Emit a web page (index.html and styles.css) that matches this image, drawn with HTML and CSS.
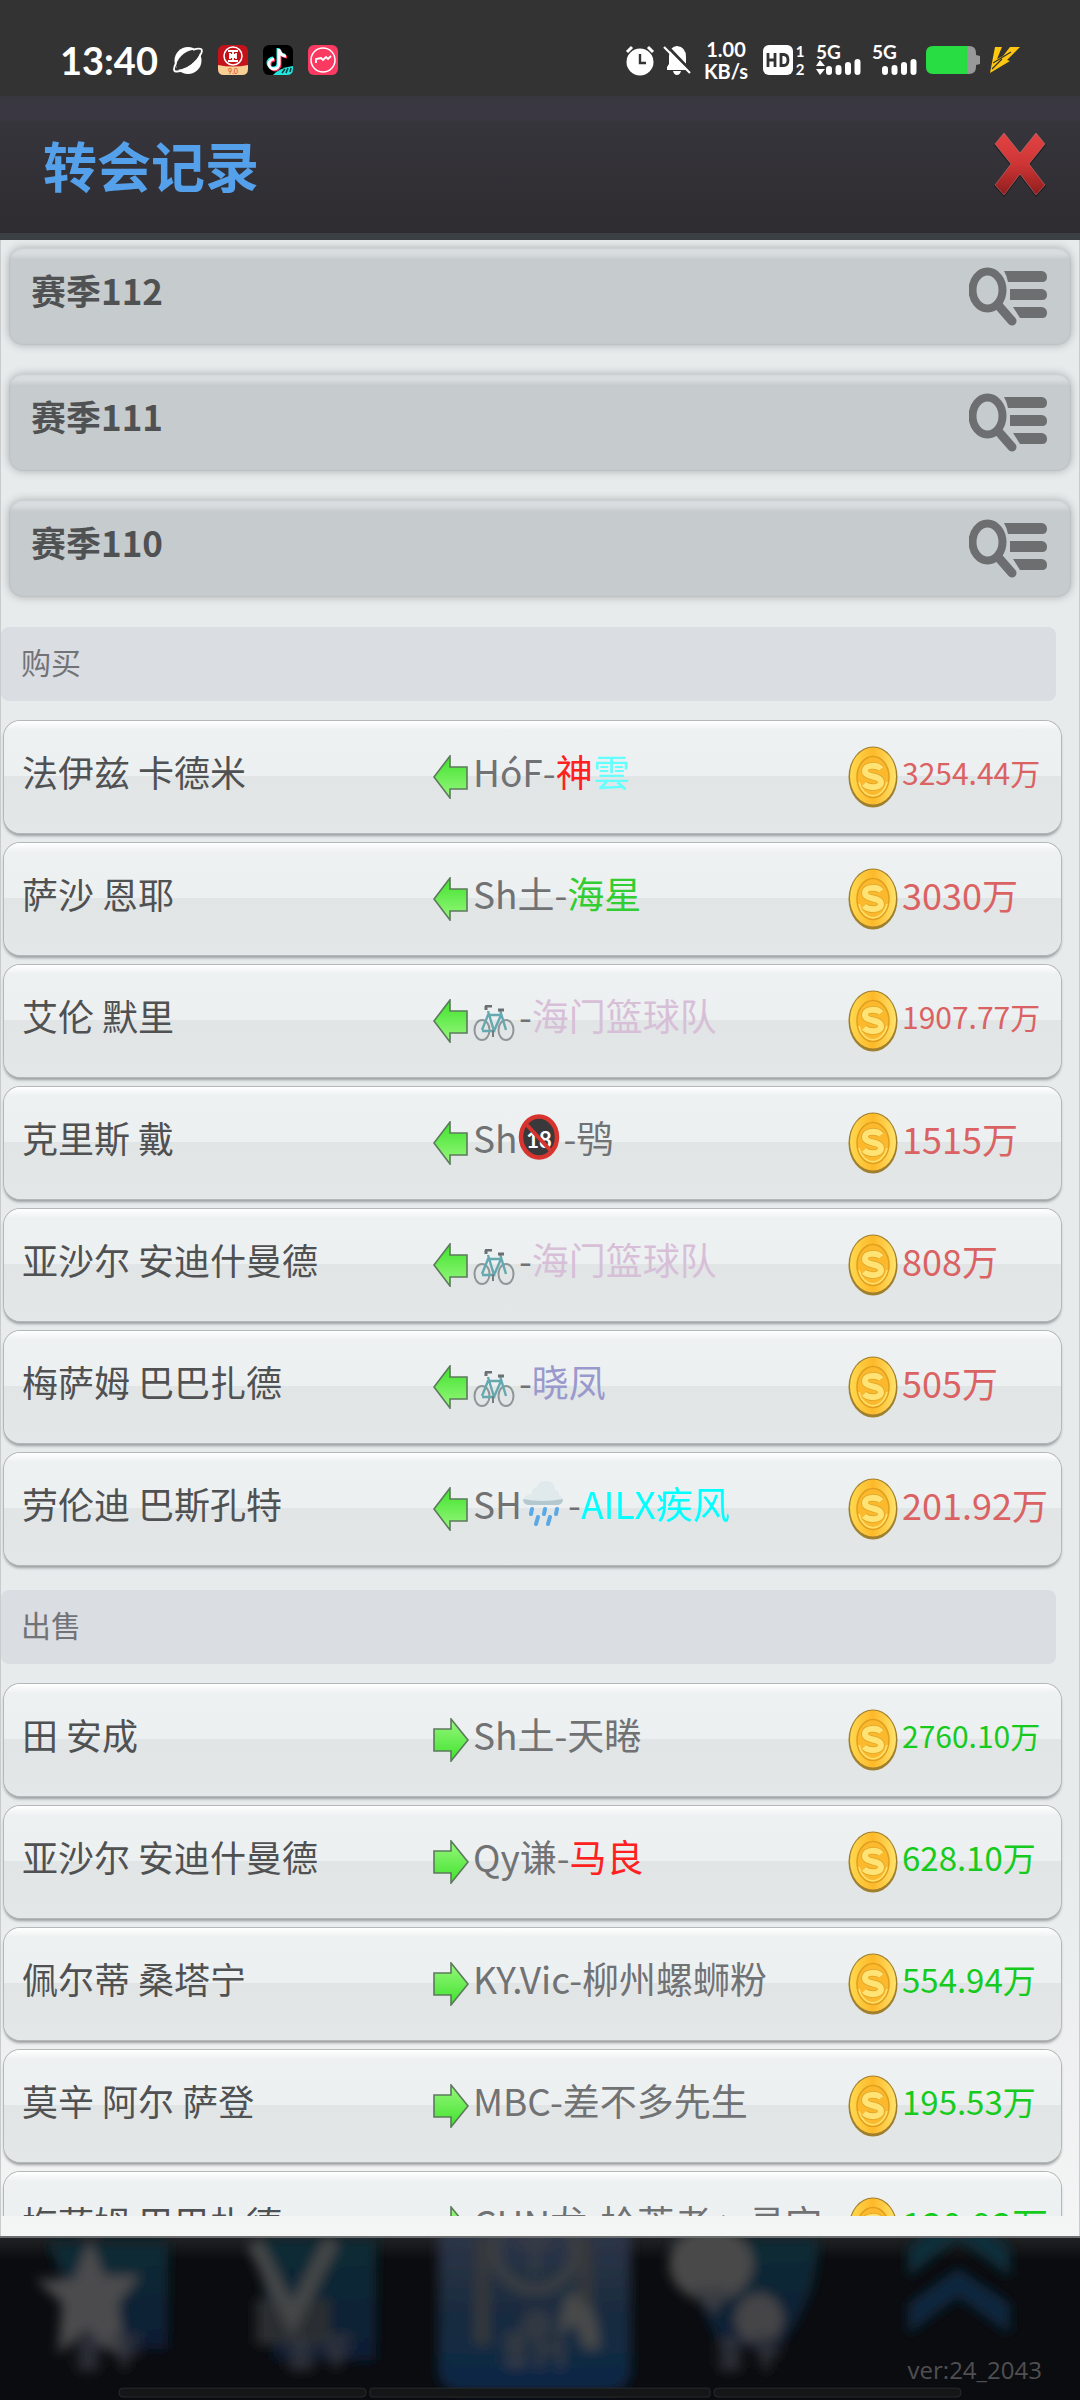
FILE: index.html
```html
<!DOCTYPE html>
<html lang="zh-CN">
<head>
<meta charset="utf-8">
<meta name="viewport" content="width=device-width, initial-scale=1">
<title>转会记录</title>
<link rel="stylesheet" href="styles.css">
</head>
<body>
<svg class="defs" aria-hidden="true">
  <defs>
    <linearGradient id="g-green" x1="0" y1="0" x2="0" y2="1"><stop offset="0" stop-color="#3fe22c"/><stop offset="1" stop-color="#98f77e"/></linearGradient>
    <linearGradient id="g-green2" x1="0" y1="0" x2="0" y2="1"><stop offset="0" stop-color="#98f77e"/><stop offset="1" stop-color="#3fe22c"/></linearGradient>
    <linearGradient id="g-gold" x1="0" y1="0" x2="1" y2="0"><stop offset="0" stop-color="#ffd84f"/><stop offset=".5" stop-color="#fdb92a"/><stop offset="1" stop-color="#ffe26a"/></linearGradient>
    <linearGradient id="g-red" x1="0" y1="0" x2="0" y2="1"><stop offset="0" stop-color="#e24343"/><stop offset=".5" stop-color="#cf3535"/><stop offset="1" stop-color="#8f1d1d"/></linearGradient>
    <symbol id="in" viewBox="0 0 36 44"><path d="M1 22 17 1V12H34V34H17V43Z" fill="url(#g-green)" stroke="#5c7a5c" stroke-width="1.6"/></symbol>
    <symbol id="out" viewBox="0 0 36 44"><path d="M35 22 18 1V11H1V33H18V43Z" fill="url(#g-green2)" stroke="#5c7a5c" stroke-width="1.6"/></symbol>
    <symbol id="coin" viewBox="0 0 50 62">
      <ellipse cx="25" cy="31" rx="24.5" ry="30.5" fill="#a0802e"/>
      <ellipse cx="25" cy="30" rx="23" ry="28.5" fill="url(#g-gold)"/>
      <ellipse cx="25" cy="31" rx="16" ry="20.5" fill="#fcb92e" stroke="#e0a01e" stroke-width="1.5"/>
      <path d="M11 36A14.500 18.500 0 0 0 39 36" fill="none" stroke="#ffe06a" stroke-width="1.5"/>
      <path d="M33 23C30 19 17 18 17 25C17 32 33 29 33 36C33 43 20 42 16 38" fill="none" stroke="#e0a525" stroke-width="7.5"/>
      <path d="M33 23C30 19 17 18 17 25C17 32 33 29 33 36C33 43 20 42 16 38" fill="none" stroke="#ffe374" stroke-width="6"/>
    </symbol>
    <symbol id="find" viewBox="0 0 78 60">
      <g fill="#6d6e6f">
        <path d="M35 4H73Q78 5 78 10T73 15H39Q38 9 35 4Z"/><path d="M41 22H73Q78 23 78 28T73 33H41Z"/><path d="M44 40H73Q78 41 78 46T73 51H51Z"/>
      </g>
      <ellipse cx="18.500" cy="23" rx="15" ry="18.500" fill="none" stroke="#6d6e6f" stroke-width="8"/>
      <path d="M29 38 43 54" stroke="#6d6e6f" stroke-width="9" stroke-linecap="round"/>
    </symbol>
    <symbol id="bike" viewBox="0 0 42 38">
      <g fill="none" stroke="#8f9698" stroke-width="2"><ellipse cx="9" cy="25" rx="7.500" ry="10"/><ellipse cx="33" cy="25" rx="7.500" ry="10"/></g>
      <path d="M9 25 15 10H28M15 6 21 26H9M21 26 28 10M27 5 33 25" fill="none" stroke="#64a9af" stroke-width="2.400"/>
      <path d="M12 1H19M13 1V5M25 5H31" fill="none" stroke="#6b7072" stroke-width="3"/>
      <path d="M20 25V32" stroke="#777c7e" stroke-width="2"/>
    </symbol>
    <symbol id="ban" viewBox="0 0 42 46">
      <ellipse cx="21" cy="23" rx="19" ry="21" fill="#39393b"/>
      <text x="21" y="34" text-anchor="middle" font-size="22" font-weight="700" fill="#fff" class="glyph">18</text>
      <path d="M7 9 34 38" stroke="#d8342f" stroke-width="4"/>
      <ellipse cx="21" cy="23" rx="18" ry="20.500" fill="none" stroke="#d8342f" stroke-width="4.500"/>
    </symbol>
    <symbol id="rain" viewBox="0 0 42 46">
      <path d="M5 24Q0 22 3 17Q6 13 10 15Q9 8 15 7Q17 0 25 1Q33 2 33 10Q37 10 37 15Q42 18 40 22L37 24Z" fill="#e0e9ec"/>
      <path d="M1 19Q20 23 41 19Q41 24 36 25H6Q1 24 1 19Z" fill="#b4c8cf"/>
      <path d="M10 29 9 34M23 29 22 34M35 29 34 34M16 37 14 44M28 37 26 44" stroke="#5aa9e6" stroke-width="4" stroke-linecap="round"/>
    </symbol>
  </defs>
</svg>

<header class="status">
  <div class="status-left">
    <span class="clock">13:40</span>
    <svg width="30" height="30" viewBox="0 0 30 30"><circle cx="15" cy="15.500" r="13.500" fill="#fff"/><path d="M3 20C6 9 18 3 27 5C28 13 18 23 4 25Z" fill="#333"/><path d="M3 18Q-1 26 3 26.500Q13 27 24 15Q31 6 28 4Q25 3 20 5" fill="none" stroke="#fff" stroke-width="1.800"/></svg>
    <svg width="30" height="30" viewBox="0 0 30 30"><rect width="30" height="30" rx="6" fill="#c4121b"/><path d="M0 20Q15 23 30 20V24Q30 30 24 30H6Q0 30 0 24Z" fill="#f8cf94"/><circle cx="15" cy="11" r="9" fill="none" stroke="#fff" stroke-width="1.500"/><path d="M10 6H20M10 16H20M12 8V10H18V8M12 14V12H18V14M15 6V16" fill="none" stroke="#fff" stroke-width="1.800"/><text x="15" y="29" font-size="7" text-anchor="middle" fill="#d53b25" class="glyph">9.0</text></svg>
    <svg width="30" height="30" viewBox="0 0 30 30"><rect width="30" height="30" rx="6" fill="#000"/><path d="M16 4V19A5 5 0 1 1 11 14M16 5Q18 11 23 11" fill="none" stroke="#ff2c55" stroke-width="3" transform="translate(1 1)"/><path d="M16 4V19A5 5 0 1 1 11 14M16 5Q18 11 23 11" fill="none" stroke="#28eee8" stroke-width="3" transform="translate(-1 -1)"/><path d="M16 4V19A5 5 0 1 1 11 14M16 5Q18 11 23 11" fill="none" stroke="#fff" stroke-width="3"/><path d="M10 30Q16 23 30 21V24Q30 30 24 30Z" fill="#22e6df"/><path d="M19 28 22 24M23 28 25 23M27 27 28 23" stroke="#073c3c" stroke-width="1.500"/></svg>
    <svg width="30" height="30" viewBox="0 0 30 30"><rect width="30" height="30" rx="6" fill="#fb3a62"/><circle cx="15" cy="15" r="12" fill="none" stroke="#fff" stroke-width="1.500"/><path d="M8 18V14L13 13 15 15 18 12 20 14 23 11" fill="none" stroke="#fff" stroke-width="1.800"/></svg>
  </div>
  <div class="status-right">
    <svg width="30" height="30" viewBox="0 0 30 30"><circle cx="15" cy="17" r="13.500" fill="#fff"/><path d="M15 9V18H21" fill="none" stroke="#333" stroke-width="2.400"/><path d="M2 7 7 2M28 7 23 2" stroke="#fff" stroke-width="3"/></svg>
    <svg class="bell" width="28" height="30" viewBox="0 0 28 30"><path d="M4 25V22L6 19V11Q7 1 14 1Q23 2 23 12V19L26 25ZM10 26H18Q17 30 14 30T10 26Z" fill="#fff"/><path d="M3 0 28 26" stroke="#333" stroke-width="3"/><path d="M1 2 27 28" stroke="#fff" stroke-width="2.200"/></svg>
    <span class="speed"><b>1.00</b><b>KB/s</b></span>
    <svg class="hd" width="43" height="30" viewBox="0 0 43 30"><rect width="30" height="30" rx="6" fill="#fff"/><path d="M5 8V22M12 8V22M5 15H12M18 9.500H21Q25 10 25 15T21 20.500H18Z" fill="none" stroke="#333" stroke-width="2.800"/><text x="37" y="12" text-anchor="middle" font-size="15" font-weight="700" fill="#fff" class="glyph">1</text><text x="37" y="30" text-anchor="middle" font-size="15" font-weight="700" fill="#fff" class="glyph">2</text></svg>
    <svg class="signal" width="46" height="30" viewBox="0 0 46 30"><text x="0" y="14" font-size="19" font-weight="700" fill="#fff" class="glyph">5G</text><path d="M0 21H9L4 15ZM0 24H9L4 30Z" fill="#fff"/><path d="M13 24V27M22.500 23V27M32 20V27M41.500 17V27" stroke="#fff" stroke-width="6" stroke-linecap="round"/></svg>
    <svg class="signal" width="46" height="30" viewBox="0 0 46 30"><text x="0" y="14" font-size="19" font-weight="700" fill="#fff" class="glyph">5G</text><path d="M13 24V27M22.500 23V27M32 20V27M41.500 17V27" stroke="#fff" stroke-width="6" stroke-linecap="round"/></svg>
    <svg class="battery" width="54" height="28" viewBox="0 0 54 28"><path d="M40 0H43Q50 0 50 7V9L54 10V18L50 19V21Q50 28 43 28H40Z" fill="#999"/><path d="M41 0V28H7Q0 28 0 21V7Q0 0 7 0Z" fill="#28dc44"/></svg>
    <svg width="30" height="26" viewBox="0 0 30 26"><path d="M5 0H12L7 12 13 9 20 0H30L17 13 20 14 0 26ZM6 16 16 13" fill="#ffc70f"/><path d="M3 16 21 5M2 22 12 12" stroke="#333" stroke-width="1.300"/></svg>
  </div>
</header>

<div class="titlebar">
  <h1>转会记录</h1>
  <button class="close" aria-label="关闭"><svg width="56" height="68" viewBox="1 0 54 68"><path d="M12 3 28 24 44 3 54 14 38 34 54 55 44 66 28 45 12 66 2 55 18 34 2 14Z" fill="#1f1b20"/><path d="M12 2 28 22 44 2 53 13 37 33 53 54 44 64 28 43 12 64 3 54 19 33 3 13Z" fill="url(#g-red)" stroke="#b88" stroke-opacity=".5"/></svg></button>
</div>

<main class="panel">
  <div class="list">
    <div class="seasons">
      <button class="season"><span>赛季112</span><svg width="78" height="60"><use href="#find"/></svg></button>
      <button class="season"><span>赛季111</span><svg width="78" height="60"><use href="#find"/></svg></button>
      <button class="season"><span>赛季110</span><svg width="78" height="60"><use href="#find"/></svg></button>
    </div>

    <h2>购买</h2>
    <table class="deals bought">
      <tbody>
        <tr><td class="name">法伊兹 卡德米</td><td class="club"><svg width="36" height="44"><use href="#in"/></svg><span>HóF-<i class="red">神</i><i class="ice">雲</i></span></td><td class="price small"><svg width="50" height="62"><use href="#coin"/></svg><span>3254.44万</span></td></tr>
        <tr><td class="name">萨沙 恩耶</td><td class="club"><svg width="36" height="44"><use href="#in"/></svg><span>Sh土-<i class="green">海星</i></span></td><td class="price"><svg width="50" height="62"><use href="#coin"/></svg><span>3030万</span></td></tr>
        <tr><td class="name">艾伦 默里</td><td class="club"><svg width="36" height="44"><use href="#in"/></svg><span><svg class="emoji low" width="42" height="38"><use href="#bike"/></svg>-<i class="thistle">海门篮球队</i></span></td><td class="price small"><svg width="50" height="62"><use href="#coin"/></svg><span>1907.77万</span></td></tr>
        <tr><td class="name">克里斯 戴</td><td class="club"><svg width="36" height="44"><use href="#in"/></svg><span>Sh<svg class="emoji" width="42" height="46"><use href="#ban"/></svg>-鸮</span></td><td class="price"><svg width="50" height="62"><use href="#coin"/></svg><span>1515万</span></td></tr>
        <tr><td class="name">亚沙尔 安迪什曼德</td><td class="club"><svg width="36" height="44"><use href="#in"/></svg><span><svg class="emoji low" width="42" height="38"><use href="#bike"/></svg>-<i class="thistle">海门篮球队</i></span></td><td class="price"><svg width="50" height="62"><use href="#coin"/></svg><span>808万</span></td></tr>
        <tr><td class="name">梅萨姆 巴巴扎德</td><td class="club"><svg width="36" height="44"><use href="#in"/></svg><span><svg class="emoji low" width="42" height="38"><use href="#bike"/></svg>-<i class="violet">晓凤</i></span></td><td class="price"><svg width="50" height="62"><use href="#coin"/></svg><span>505万</span></td></tr>
        <tr><td class="name">劳伦迪 巴斯孔特</td><td class="club"><svg width="36" height="44"><use href="#in"/></svg><span>SH<svg class="emoji" width="42" height="46"><use href="#rain"/></svg>-<i class="cyan">AILX疾风</i></span></td><td class="price"><svg width="50" height="62"><use href="#coin"/></svg><span>201.92万</span></td></tr>
      </tbody>
    </table>

    <h2>出售</h2>
    <table class="deals sold">
      <tbody>
        <tr><td class="name">田 安成</td><td class="club"><svg width="36" height="44"><use href="#out"/></svg><span>Sh土-天睠</span></td><td class="price small"><svg width="50" height="62"><use href="#coin"/></svg><span>2760.10万</span></td></tr>
        <tr><td class="name">亚沙尔 安迪什曼德</td><td class="club"><svg width="36" height="44"><use href="#out"/></svg><span>Qy谦-<i class="red">马良</i></span></td><td class="price medium"><svg width="50" height="62"><use href="#coin"/></svg><span>628.10万</span></td></tr>
        <tr><td class="name">佩尔蒂 桑塔宁</td><td class="club"><svg width="36" height="44"><use href="#out"/></svg><span>KY.Vic-柳州螺蛳粉</span></td><td class="price medium"><svg width="50" height="62"><use href="#coin"/></svg><span>554.94万</span></td></tr>
        <tr><td class="name">莫辛 阿尔 萨登</td><td class="club"><svg width="36" height="44"><use href="#out"/></svg><span>MBC-差不多先生</span></td><td class="price medium"><svg width="50" height="62"><use href="#coin"/></svg><span>195.53万</span></td></tr>
        <tr><td class="name">梅萨姆 巴巴扎德</td><td class="club"><svg width="36" height="44"><use href="#out"/></svg><span>CHN龙-拾荒者丶寻宝</span></td><td class="price"><svg width="50" height="62"><use href="#coin"/></svg><span>130.93万</span></td></tr>
      </tbody>
    </table>
  </div>
</main>

<footer class="dock">
  <svg class="dock-art" viewBox="0 0 1080 164" preserveAspectRatio="none" aria-hidden="true">
    <defs>
      <filter id="soft" x="-10%" y="-10%" width="120%" height="120%"><feGaussianBlur stdDeviation="6"/></filter>
      <linearGradient id="tile" x1="0" y1="0" x2="0" y2="1"><stop offset="0" stop-color="#323748"/><stop offset=".5" stop-color="#1b2c40"/><stop offset="1" stop-color="#0a2745"/></linearGradient>
      <linearGradient id="blue" x1="0" y1="0" x2="0" y2="1"><stop offset="0" stop-color="#102c36"/><stop offset="1" stop-color="#0a1d36"/></linearGradient>
      <linearGradient id="topfade" x1="0" y1="0" x2="0" y2="1"><stop offset="0" stop-color="#202123"/><stop offset="1" stop-color="#0b0c0f"/></linearGradient>
    </defs>
    <rect width="1080" height="164" fill="#0b0c0f"/>
    <rect width="1080" height="22" fill="url(#topfade)"/>
    <g filter="url(#soft)">
      <path d="M48 4H168V112H90Z" fill="url(#blue)"/>
      <path d="M90 0 104 38H140L118 66 124 112H104L88 92 58 118 62 66 36 42H74Z" fill="#4c4c4d"/>
      <path d="M76 106H100M76 118H100M76 130H100M88 100V134M110 102H140M112 116H138M124 102V132" stroke="#32343e" stroke-width="7"/>
      <path d="M255 0H376V124H275Z" fill="url(#blue)"/>
      <rect x="256" y="62" width="74" height="46" fill="#2a2e32"/>
      <path d="M254 4 292 82 332 2" fill="none" stroke="#454647" stroke-width="16"/>
      <path d="M288 106H314M288 118H314M288 130H314M300 100V134M322 102H352M324 116H350M336 102V132" stroke="#32343e" stroke-width="7"/>
      <rect x="438" y="-20" width="193" height="176" rx="22" fill="url(#tile)"/>
      <path d="M482 0V108M585 0V70" stroke="#34373a" stroke-width="15"/>
      <circle cx="535" cy="12" r="40" fill="none" stroke="#3b3d42" stroke-width="12"/>
      <path d="M518 5H552M535 -5V35" stroke="#3b3d42" stroke-width="6"/>
      <path d="M558 96Q562 56 572 56Q580 56 582 66Q598 66 600 112H584L576 88Z" fill="#464849"/>
      <circle cx="537" cy="88" r="16" fill="#303943"/>
      <path d="M504 100H528M504 112H528M504 126H528M516 94V132M540 96V132M560 96V132M540 112H562" stroke="#393b44" stroke-width="7"/>
      <path d="M670 0H818Q820 60 780 110H720Z" fill="url(#blue)"/>
      <ellipse cx="711" cy="26" rx="42" ry="38" fill="#484849"/>
      <path d="M690 50 714 78 730 50Z" fill="#3a3c42"/>
      <ellipse cx="759" cy="82" rx="24" ry="26" fill="#444546"/>
      <path d="M718 106H742M718 118H742M718 130H742M730 100V134M754 102H780M756 116H780M766 102V134" stroke="#32343e" stroke-width="7"/>
      <path d="M908 10 958 -32 1010 10V40L958 0 908 40Z" fill="#0f2e3a"/>
      <path d="M908 66 958 30 1010 66V98L958 60 908 98Z" fill="#0a273d"/>
    </g>
    <g fill="#151618" stroke="#292a2c"><rect x="119" y="152" width="247" height="9" rx="4"/><rect x="370" y="152" width="340" height="9" rx="2"/><rect x="714" y="152" width="247" height="9" rx="4"/></g>
  </svg>
  <span class="version">ver:24_2043</span>
</footer>
</body>
</html>
```
FILE: styles.css
```css
* { box-sizing: border-box; }

body {
  margin: 0;
  height: 100vh;
  display: flex;
  flex-direction: column;
  overflow: hidden;
  background: #0b0c0f;
  color: #505152;
  font-family: "Noto Sans CJK SC", "Noto Sans", sans-serif;
}

.defs { position: absolute; width: 0; height: 0; }
svg { flex: none; }
i { font-style: normal; }
button { border: 0; padding: 0; background: none; font: inherit; color: inherit; cursor: pointer; }
.glyph { font-family: Lato, "Noto Sans", sans-serif; }

/* phone status bar */
.status {
  flex: none;
  height: 96px;
  padding: 24px 60px 0;
  display: flex;
  align-items: flex-start;
  justify-content: space-between;
  background: #333;
  color: #fff;
  font-family: Lato, "Noto Sans", sans-serif;
}
.status svg { overflow: visible; }
.status-left, .status-right { display: flex; align-items: center; height: 72px; }
.status { align-items: center; padding-bottom: 0; }
.status-left { gap: 15px; }
.clock { font-size: 38px; font-weight: 700; line-height: 48px; }
.bell { margin-left: 8px; }
.speed { width: 48px; margin-left: 11px; display: flex; flex-direction: column; align-items: center; font-size: 20px; line-height: 22px; }
.hd { margin-left: 13px; }
.signal { margin-left: 10px; }
.battery { margin: 0 10px 0 8px; }

/* title bar */
.titlebar {
  flex: none;
  height: 144px;
  padding: 0 32px 0 43px;
  display: flex;
  align-items: center;
  justify-content: space-between;
  background: linear-gradient(#39373e, #3a3743 16%, #36353b 20%, #2e2c31);
  border-bottom: 7px solid #3a4043;
}
h1 { margin: 0; color: #54a0ea; font-size: 54px; line-height: 64px; font-weight: 700; }
.close { display: flex; }

/* scrolling panel */
.panel {
  flex: 1;
  min-height: 0;
  padding-bottom: 20px;
  display: flex;
  border: solid #c9cccd;
  border-width: 0 1px;
  background: linear-gradient(#e7ebec 80%, #f4f5f5);
}
.list { flex: 1; overflow-y: auto; scrollbar-width: none; }

.seasons { padding: 8px 8px 30px; display: grid; gap: 29px; }
.season {
  height: 97px;
  padding: 0 24px 0 22px;
  display: flex;
  align-items: center;
  justify-content: space-between;
  border-radius: 14px;
  background: linear-gradient(#d9dddf, #d8dcde 6%, #c6cbcd 12%);
  box-shadow: 0 0 8px #a9adae, inset 0 0 2px #a9adae;
  font-size: 35px;
  font-weight: 700;
  line-height: 44px;
}
.season span { padding-bottom: 14px; }

h2 {
  margin: 0 23px 20px 0;
  padding: 12px 20px 18px;
  border-radius: 8px;
  background: #dadde2;
  color: #727376;
  font-size: 30px;
  line-height: 44px;
  font-weight: 400;
}

.deals { display: block; margin: 0 18px 25px 3px; }
.deals tbody { display: grid; gap: 10px; }
.deals tr {
  height: 112px;
  display: grid;
  grid-template-columns: 429fr 415fr 213fr;
  align-items: center;
  border-radius: 16px;
  background: linear-gradient(#fff, #eef1f2 8%, #edf0f1 49%, #e1e5e6 49%, #e4e7e8);
  box-shadow: 0 0 0 1px #b4b8b9, 0 3px 3px #999d9e;
}
.deals td { padding: 0; font-size: 36px; line-height: 44px; white-space: nowrap; }
.deals .name { padding: 0 0 12px 18px; }
.club, .price { display: flex; align-items: center; }
.deals .club { gap: 4px; color: #717274; font-size: 37px; }
.club > span { display: flex; align-items: center; padding-bottom: 12px; }
.price > span { padding-bottom: 10px; }
.price { gap: 4px; color: #db6262; }
.sold .price { color: #16cb1e; }
.deals .small { font-size: 30px; }
.deals .medium { font-size: 33px; }
.emoji { margin: -2px 4px -2px 0; }
.emoji.low { margin: 12px 4px -6px 0; }

.red { color: #ff2020; }
.ice { color: #66ffff; }
.green { color: #32cd32; }
.thistle { color: #d8bfd8; }
.violet { color: #9999cc; }
.cyan { color: #00ffff; }

/* dimmed dock */
.dock { flex: none; height: 164px; display: grid; border-top: 2px solid #6b6d6e; }
.dock-art, .version { grid-area: 1 / 1; }
.dock-art { width: 100%; height: 162px; }
.version { align-self: end; justify-self: end; padding: 0 38px 14px 0; color: #4f4f51; font-family: "Open Sans", sans-serif; font-size: 24px; line-height: 32px; }
```
